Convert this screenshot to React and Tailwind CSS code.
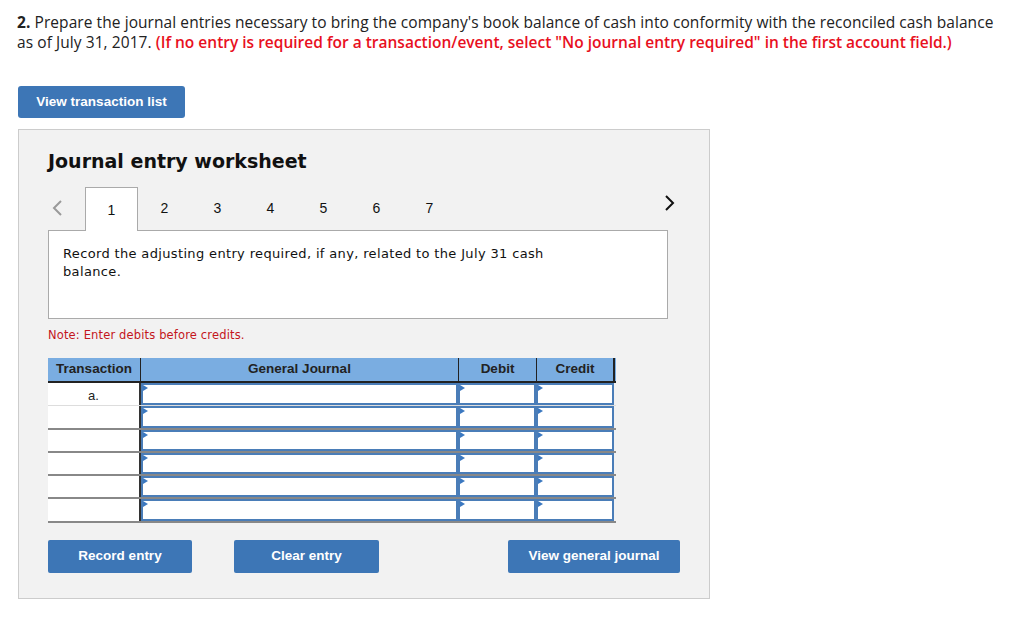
import React from "react";

const Tri = () => (
  <span className="absolute left-0 top-0 w-0 h-0 border-t-[3px] border-b-[3px] border-l-[5px] border-t-transparent border-b-transparent border-l-[#3b78c0]" />
);

const Cell = ({ w }) => (
  <div className={`relative ${w} h-full border-2 border-[#4a7db8] bg-white`}>
    <Tri />
  </div>
);

export default function App() {
  const rows = ["a.", "", "", "", "", ""];
  return (
    <div className="w-[1024px] h-[625px] bg-white relative overflow-hidden font-['Open_Sans',sans-serif]">
      <div className="pl-[17px] pt-[12px] text-[15.5px] leading-[20px] text-[#222] tracking-[0.07px]">
        <span className="font-bold">2.</span> Prepare the journal entries necessary to bring the company's book balance of cash into conformity with the reconciled cash balance
        <br />
        as of July 31, 2017. <span className="font-semibold tracking-normal text-[#e8101e]">(If no entry is required for a transaction/event, select "No journal entry required" in the first account field.)</span>
      </div>

      <div className="pl-[18px] mt-[34px]">
        <button className="w-[167px] h-[32px] rounded-[3px] bg-[#3d76b6] text-white text-[13.5px] font-bold font-['Liberation_Sans',Arial,sans-serif]">
          View transaction list
        </button>
      </div>

      <div className="ml-[18px] mt-[11px] w-[692px] h-[470px] bg-[#f2f2f2] border border-[#cccccc] pl-[29px] font-['DejaVu_Sans',sans-serif]">
        <div className="pt-[19px] text-[19px] font-bold text-[#111] leading-[24px]">Journal entry worksheet</div>

        <div className="mt-[13px] flex items-end h-[44px] relative w-[620px] font-['Liberation_Sans',Arial,sans-serif]">
          <div className="w-[37px] h-full flex items-center justify-start pl-[3px]">
            <svg width="12" height="18" viewBox="0 0 12 18"><path d="M10 2 L3 9 L10 16" stroke="#9a9a9a" strokeWidth="2" fill="none" /></svg>
          </div>
          <div className="w-[53px] h-[44px] bg-white border border-b-0 border-[#aaa] flex items-center justify-center text-[14px] text-[#111] relative z-10 -mb-px pt-[1px]">1</div>
          {["2", "3", "4", "5", "6", "7"].map((n) => (
            <div key={n} className="w-[53px] h-full flex items-center justify-center text-[14px] text-[#111]">{n}</div>
          ))}
          <div className="absolute right-[-7px] top-[8px]">
            <svg width="12" height="18" viewBox="0 0 12 18"><path d="M3 2 L10 9 L3 16" stroke="#111" strokeWidth="2" fill="none" /></svg>
          </div>
        </div>
        <div className="w-[620px] h-[89px] bg-white border border-[#aaa] pl-[14px] pt-[14px] text-[13px] leading-[18px] tracking-[0.35px] text-[#111]">
          Record the adjusting entry required, if any, related to the July 31 cash
          <br />
          balance.
        </div>
        <div className="mt-[8px] text-[11.5px] tracking-[0.15px] text-[#c4161c] leading-[16px]">Note: Enter debits before credits.</div>

        <div className="mt-[15px] w-[568px] font-['Liberation_Sans',Arial,sans-serif]">
          <div className="flex h-[25px] bg-[#7aade1] border-b-2 border-[#222] text-[13.5px] font-bold text-[#222]">
            <div className="w-[93px] flex items-center justify-center border-r border-[#222]">Transaction</div>
            <div className="w-[318px] flex items-center justify-center border-r border-[#222]">General Journal</div>
            <div className="w-[78px] flex items-center justify-center border-r border-[#222]">Debit</div>
            <div className="w-[78px] flex items-center justify-center border-r-2 border-[#222]">Credit</div>
          </div>
          {rows.map((r, i) => (
            <div key={i} className={`flex h-[23.3px] ${i === 0 ? "border-b border-[#ddd]" : "border-b-2 border-[#888]"}`}>
              <div className="w-[93px] bg-white flex items-start justify-center pt-[3px] text-[13px] text-[#222] border-r-2 border-[#333]">{r}</div>
              <Cell w="w-[317px]" />
              <Cell w="w-[78px]" />
              <Cell w="w-[78px]" />
            </div>
          ))}
        </div>

        <div className="mt-[17px] flex w-[632px] text-white text-[13.5px] font-bold font-['Liberation_Sans',Arial,sans-serif]">
          <button className="w-[144px] h-[33px] rounded-[2px] bg-[#3d76b6]">Record entry</button>
          <button className="ml-[42px] w-[145px] h-[33px] rounded-[2px] bg-[#3d76b6]">Clear entry</button>
          <button className="ml-auto w-[172px] h-[33px] rounded-[2px] bg-[#3d76b6]">View general journal</button>
        </div>
      </div>
    </div>
  );
}
